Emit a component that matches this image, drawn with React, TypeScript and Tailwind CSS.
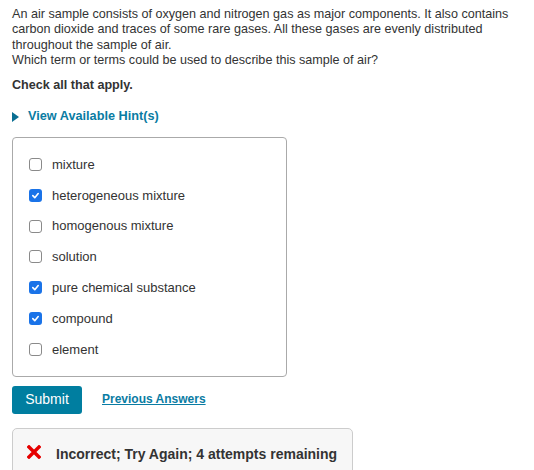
import React from "react";

const options: { label: string; checked: boolean }[] = [
  { label: "mixture", checked: false },
  { label: "heterogeneous mixture", checked: true },
  { label: "homogenous mixture", checked: false },
  { label: "solution", checked: false },
  { label: "pure chemical substance", checked: true },
  { label: "compound", checked: true },
  { label: "element", checked: false },
];

function Box({ checked }: { checked: boolean }) {
  if (checked) {
    return (
      <span className="w-[13px] h-[13px] rounded-[3px] bg-[#1a73e8] flex items-center justify-center shrink-0">
        <svg width="9" height="9" viewBox="0 0 10 10">
          <path d="M2 5.2 L4.2 7.4 L8 2.8" fill="none" stroke="white" strokeWidth="1.8" strokeLinecap="round" strokeLinejoin="round" />
        </svg>
      </span>
    );
  }
  return <span className="w-[13px] h-[13px] rounded-[3px] border border-[#8a8a8a] bg-white shrink-0" />;
}

export default function App() {
  return (
    <div className="w-[534px] h-[470px] overflow-hidden bg-white text-[#333] px-3 pt-[7px]" style={{ fontFamily: '"Liberation Sans", Arial, sans-serif' }}>
      <p className="text-[12.6px] leading-[15.3px]">
        An air sample consists of oxygen and nitrogen gas as major components. It also contains carbon dioxide and traces of some rare gases. All these gases are evenly distributed throughout the sample of air.
        <br />
        Which term or terms could be used to describe this sample of air?
      </p>
      <p className="text-[12.6px] leading-[15px] font-bold mt-[10px]">Check all that apply.</p>
      <div className="flex items-center mt-[16px] text-[#0a7ca3] font-bold text-[12.7px] leading-[15px]">
        <svg width="7" height="10" viewBox="0 0 7 10">
          <path d="M0 0 L7 5 L0 10 Z" fill="#0a6f93" />
        </svg>
        <span className="ml-[9px]">View Available Hint(s)</span>
      </div>
      <div className="mt-[13px] w-[275px] border border-[#aaa] rounded-[4px] pt-[11px] pb-[11px] pl-[16px]">
        {options.map((o) => (
          <div key={o.label} className="flex items-center h-[30.8px]">
            <Box checked={o.checked} />
            <span className="ml-[10px] text-[13px]">{o.label}</span>
          </div>
        ))}
      </div>
      <div className="flex items-center mt-[9px]">
        <button className="w-[70px] h-[28px] rounded-[3px] bg-[#007ea0] text-white text-[14px]">Submit</button>
        <a className="ml-[20px] text-[12px] font-bold underline text-[#0a7ca3] -mt-[2px]">Previous Answers</a>
      </div>
      <div className="mt-[14px] w-[341px] h-[60px] border border-[#ccc] rounded-[5px] bg-[#f7f7f7] flex items-start pt-[15px] pl-[14px]">
        <svg width="14" height="14" viewBox="0 0 14 14" className="mt-[1px]">
          <path d="M2 2 L12 12 M12 2 L2 12" stroke="#e60000" strokeWidth="3.4" strokeLinecap="square" />
        </svg>
        <span className="ml-[15px] font-bold text-[14px] text-[#333]">Incorrect; Try Again; 4 attempts remaining</span>
      </div>
    </div>
  );
}
